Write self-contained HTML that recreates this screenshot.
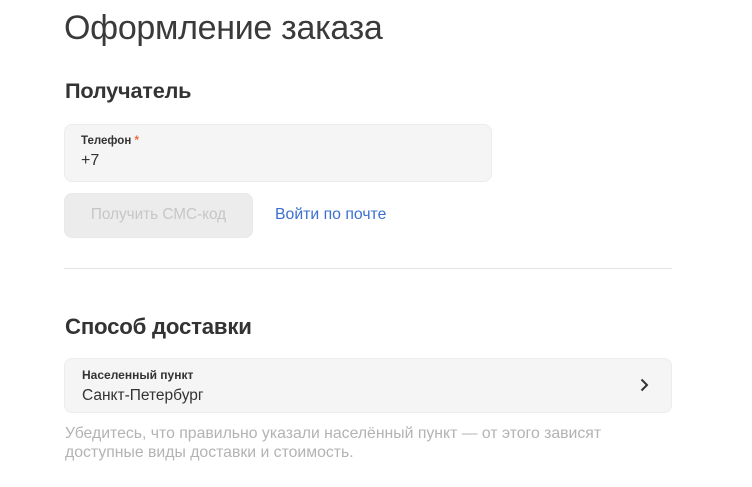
<!DOCTYPE html>
<html><head><meta charset="utf-8"><style>
*{margin:0;padding:0;box-sizing:border-box}
body{width:752px;height:487px;background:#fff;font-family:"Liberation Sans",sans-serif;position:relative;overflow:hidden;color:#333}
.a{position:absolute;white-space:nowrap}
.h1{left:64px;top:7px;font-size:34px;color:#3a3a3a;letter-spacing:-0.3px;line-height:42px}
.h2{font-size:21.7px;font-weight:bold;color:#333;letter-spacing:-0.2px;line-height:24px}
.box{position:absolute;background:#f5f5f5;border:1px solid #ececec;border-radius:8px}
.lbl{font-size:12px;font-weight:bold;color:#333;line-height:14px}
.val{font-size:15.5px;color:#333;line-height:20px}
</style></head><body>
<div class="a h1">Оформление заказа</div>
<div class="a h2" style="left:65px;top:79px">Получатель</div>
<div class="box" style="left:64px;top:124px;width:428px;height:58px"></div>
<div class="a lbl" style="left:81px;top:134px;font-size:11.5px">Телефон<span style="color:#f26b3a"> *</span></div>
<div class="a val" style="left:81px;top:151px;font-size:16px">+7</div>
<div class="box" style="left:64px;top:193px;width:189px;height:45px;background:#ececec;border-color:#e8e8e8"></div>
<div class="a" style="left:64px;top:206px;width:189px;text-align:center;font-size:15.3px;color:#c6c6c6;line-height:18px">Получить СМС-код</div>
<div class="a" style="left:275px;top:206px;font-size:15.8px;color:#3b6fd0;line-height:18px">Войти по почте</div>
<div class="a" style="left:64px;top:268px;width:608px;height:1px;background:#e3e3e3"></div>
<div class="a h2" style="left:65px;top:315px;font-size:22.2px">Способ доставки</div>
<div class="box" style="left:64px;top:358px;width:608px;height:55px"></div>
<div class="a lbl" style="left:82px;top:368px">Населенный пункт</div>
<div class="a val" style="left:82px;top:386px">Санкт-Петербург</div>
<svg class="a" style="left:636px;top:376px" width="16" height="18" viewBox="0 0 16 18"><path d="M5.5 3.5 L11 9 L5.5 14.5" fill="none" stroke="#333" stroke-width="2"/></svg>
<div class="a" style="left:65px;top:424px;font-size:15.8px;color:#b3b3b3;line-height:19px">Убедитесь, что правильно указали населённый пункт — от этого зависят<br>доступные виды доставки и стоимость.</div>
</body></html>
